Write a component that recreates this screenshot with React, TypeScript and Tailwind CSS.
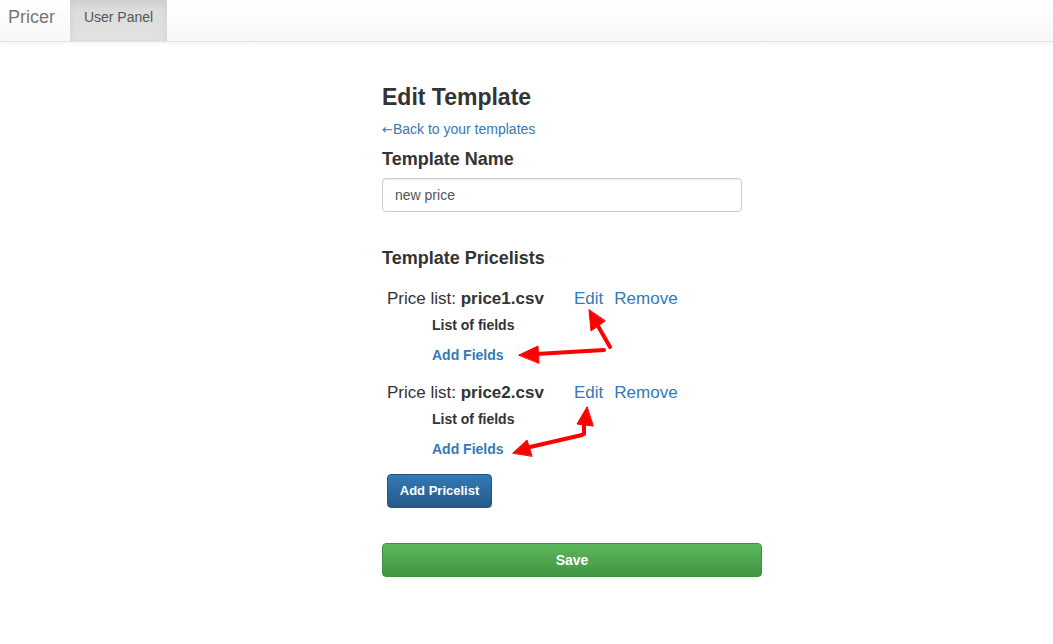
import React from "react";

type PriceList = { file: string };

const PRICE_LISTS: PriceList[] = [{ file: "price1.csv" }, { file: "price2.csv" }];

function Navbar() {
  return (
    <nav className="flex h-[42px] items-stretch border-b border-[#e3e3e3] bg-gradient-to-b from-white to-[#f8f8f8] shadow-[0_1px_4px_rgba(0,0,0,0.06)]">
      <a className="flex items-center pb-[6px] pl-[8px] pr-[15px] text-[18px] text-[#777]">Pricer</a>
      <a className="flex w-[97px] items-center justify-center bg-gradient-to-b from-[#dbdbdb] to-[#e2e2e2] pb-[6px] text-[14px] text-[#555] shadow-[inset_0_3px_9px_rgba(0,0,0,0.075)]">
        User Panel
      </a>
    </nav>
  );
}

function PriceListRow({ item }: { item: PriceList }) {
  return (
    <div className="pl-[5px]">
      <div className="flex h-[24px] items-center text-[17px] text-[#333]">
        <span className="w-[187px]">
          Price list: <b>{item.file}</b>
        </span>
        <a className="text-[#337ab7]">Edit</a>
        <a className="ml-[11px] text-[#337ab7]">Remove</a>
      </div>
      <div className="mt-[4px] pl-[45px] text-[14px] font-bold leading-[20px] text-[#333]">List of fields</div>
      <div className="mt-[10px] pl-[45px] text-[14px] font-bold leading-[20px] text-[#337ab7]">Add Fields</div>
    </div>
  );
}

function Arrows() {
  return (
    <svg className="pointer-events-none absolute left-0 top-0" width="1053" height="644" viewBox="0 0 1053 644">
      <g fill="#f00" stroke="#f00" strokeLinecap="round">
        <line x1="598" y1="326" x2="610" y2="347" strokeWidth="4" />
        <polygon points="589,310 591,331 605,321" strokeWidth="1" />
        <line x1="604" y1="350" x2="536" y2="354" strokeWidth="4" />
        <polygon points="519,355 538,346 539,363" strokeWidth="1" />
        <line x1="584" y1="423" x2="584" y2="434" strokeWidth="4" />
        <polygon points="587,407 577,424 593,426" strokeWidth="1" />
        <line x1="582" y1="435" x2="530" y2="447" strokeWidth="4" />
        <polygon points="513,453 527,440 532,456" strokeWidth="1" />
      </g>
    </svg>
  );
}

export default function App() {
  return (
    <div className="relative min-h-[644px] bg-white font-['Liberation_Sans',Arial,sans-serif] text-[#333]">
      <Navbar />
      <main className="ml-[382px] w-[380px]">
        <h3 className="mt-[42px] text-[23px] font-bold leading-[26px]">Edit Template</h3>
        <a className="mt-[9px] block h-[20px] text-[14px] leading-[20px] text-[#337ab7]">
          <span className="font-['DejaVu_Sans',sans-serif] text-[13px] leading-none">←</span>Back to your templates
        </a>
        <h4 className="mt-[10px] text-[18px] font-bold leading-[20px]">Template Name</h4>
        <input
          className="mt-[9px] h-[34px] w-[360px] rounded-[4px] border border-[#ccc] px-[12px] text-[14px] text-[#555] shadow-[inset_0_1px_1px_rgba(0,0,0,0.075)] outline-none"
          defaultValue="new price"
        />
        <h4 className="mt-[36px] text-[18px] font-bold leading-[20px]">Template Pricelists</h4>
        <div className="mt-[19px] flex flex-col gap-[16px]">
          {PRICE_LISTS.map((p) => (
            <PriceListRow key={p.file} item={p} />
          ))}
        </div>
        <button className="ml-[5px] mt-[15px] h-[34px] w-[105px] rounded-[4px] border border-[#245580] bg-gradient-to-b from-[#337ab7] to-[#265a88] text-[13px] font-bold text-white">
          Add Pricelist
        </button>
        <button className="mt-[35px] block h-[34px] w-[380px] rounded-[4px] border border-[#3e8f3e] bg-gradient-to-b from-[#5cb85c] to-[#419641] text-[14px] font-bold text-white">
          Save
        </button>
      </main>
      <Arrows />
    </div>
  );
}
